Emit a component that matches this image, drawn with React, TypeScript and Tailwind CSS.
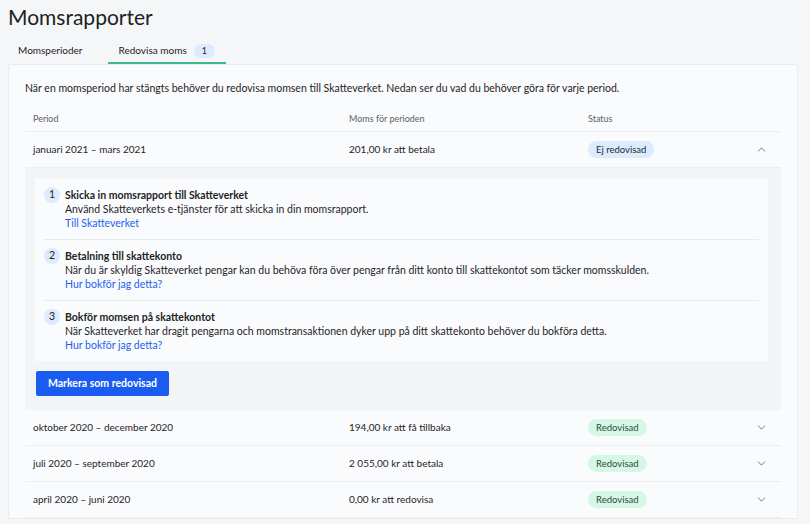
import { ChevronDown, ChevronUp } from "lucide-react";

const steps = [
  {
    n: 1,
    title: "Skicka in momsrapport till Skatteverket",
    text: "Använd Skatteverkets e-tjänster för att skicka in din momsrapport.",
    link: "Till Skatteverket",
  },
  {
    n: 2,
    title: "Betalning till skattekonto",
    text: "När du är skyldig Skatteverket pengar kan du behöva föra över pengar från ditt konto till skattekontot som täcker momsskulden.",
    link: "Hur bokför jag detta?",
  },
  {
    n: 3,
    title: "Bokför momsen på skattekontot",
    text: "När Skatteverket har dragit pengarna och momstransaktionen dyker upp på ditt skattekonto behöver du bokföra detta.",
    link: "Hur bokför jag detta?",
  },
];

const rows = [
  { period: "oktober 2020 – december 2020", amount: "194,00 kr att få tillbaka" },
  { period: "juli 2020 – september 2020", amount: "2 055,00 kr att betala" },
  { period: "april 2020 – juni 2020", amount: "0,00 kr att redovisa" },
];

function Row({
  period,
  amount,
  badge,
  open,
}: {
  period: string;
  amount: string;
  badge: "ej" | "ok";
  open?: boolean;
}) {
  return (
    <div className="flex h-9 items-center border-b border-[#eceef1] px-2 text-[10px] text-[#1f2328]">
      <div className="w-[316px]">{period}</div>
      <div className="w-[239px]">{amount}</div>
      <div className="flex-1">
        {badge === "ej" ? (
          <span className="rounded-full bg-[#dcebfd] px-[8px] py-[3px] text-[9.5px] text-[#1f2a3a]">
            Ej redovisad
          </span>
        ) : (
          <span className="rounded-full bg-[#d5f7e6] px-[8px] py-[3px] text-[9.5px] text-[#2c4a3c]">
            Redovisad
          </span>
        )}
      </div>
      <div className="mr-[5px] text-[#555b63]">
        {open ? (
          <ChevronUp size={13} strokeWidth={1.5} />
        ) : (
          <ChevronDown size={13} strokeWidth={1.5} />
        )}
      </div>
    </div>
  );
}

export default function App() {
  return (
    <div
      className="min-h-[524px] bg-[#f5f6f7] px-2 text-[#1f2328]"
      style={{ fontFamily: 'Lato, "Noto Sans", sans-serif' }}
    >
      <h1 className="pt-[2px] text-[21px] leading-[30px] text-[#1c1f23]">Momsrapporter</h1>
      <div className="mt-[7px] flex text-[10px]">
        <div className="px-[10px] pb-[6px] pt-[4px]">Momsperioder</div>
        <div className="ml-[16px] flex items-center border-b-2 border-[#3db88b] pb-[4px] pl-[10px] pr-[11px] pt-[4px]">
          Redovisa moms
          <span className="ml-[7px] rounded-full bg-[#dcebfd] px-[8px] text-[9px] leading-[14px]">1</span>
        </div>
      </div>
      <div className="mr-[4px] rounded-t-[3px] border border-[#eaecef] bg-[#fafbfc] px-4 pt-[14px]">
        <p className="text-[10.5px] leading-[18px]">
          När en momsperiod har stängts behöver du redovisa momsen till Skatteverket. Nedan ser du vad du
          behöver göra för varje period.
        </p>
        <div className="mt-[10px]">
          <div className="flex h-[25px] items-center border-b border-[#eceef1] px-2 text-[9px] text-[#5c6168]">
            <div className="w-[316px]">Period</div>
            <div className="w-[239px]">Moms för perioden</div>
            <div className="flex-1">Status</div>
          </div>
          <Row period="januari 2021 – mars 2021" amount="201,00 kr att betala" badge="ej" open />
          <div className="bg-[#f3f4f6] pb-[14px] pl-[10px] pr-[13px] pt-[10px]">
            <div className="bg-[#fafbfc] pb-[9px] pl-[9px] pr-[9px] pt-[10px]">
              {steps.map((s, i) => (
                <div
                  key={s.n}
                  className={`flex gap-[5px] ${i < 2 ? "mb-[9px] border-b border-[#e8eaed] pb-[9px]" : ""}`}
                >
                  <span className="mt-[-1px] flex h-[16px] w-[16px] shrink-0 items-center justify-center rounded-full bg-[#dcebfd] text-[10.5px]">
                    {s.n}
                  </span>
                  <div className="text-[10.5px] leading-[14px]">
                    <div className="font-bold text-[#1c1f23]">{s.title}</div>
                    <div>{s.text}</div>
                    <div className="text-[#1d5ff0]">{s.link}</div>
                  </div>
                </div>
              ))}
            </div>
            <button className="ml-[1px] mt-[10px] h-[25px] rounded-[2px] bg-[#1a5cf2] px-[12px] text-[10.5px] font-bold text-white">
              Markera som redovisad
            </button>
          </div>
          {rows.map((r) => (
            <Row key={r.period} period={r.period} amount={r.amount} badge="ok" />
          ))}
        </div>
      </div>
    </div>
  );
}
